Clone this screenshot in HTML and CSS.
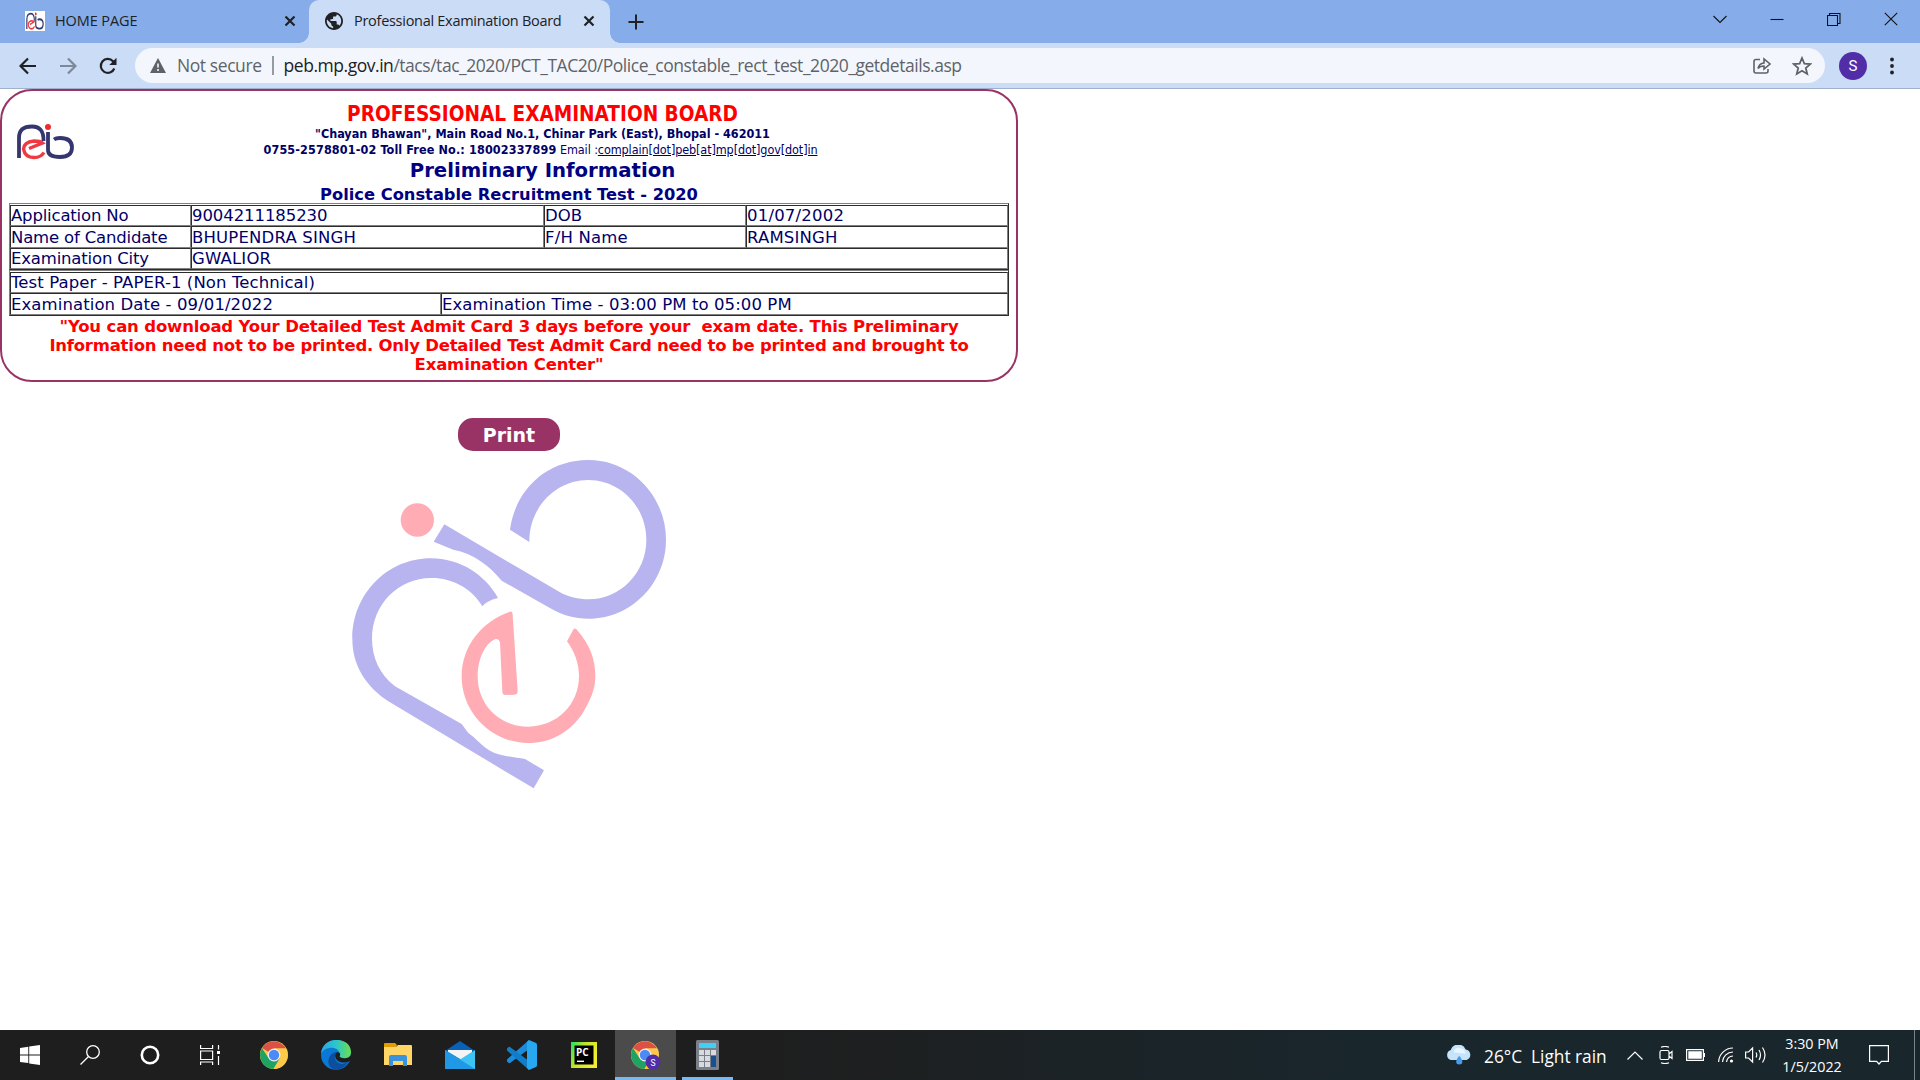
FILE: index.html
```html
<!DOCTYPE html>
<html lang="en">
<head>
<meta charset="utf-8">
<title>Professional Examination Board</title>
<link rel="stylesheet" href="styles.css">
</head>
<body>
<header class="tabstrip">
  <div class="tab">
    <svg class="favicon" viewBox="-4 -3 65 41" preserveAspectRatio="none"><rect x="-5" y="-5" width="70" height="50" fill="#fff"/><use href="#peb"/></svg>
    <span class="tab-title t-home">HOME PAGE</span>
    <svg class="tab-close" viewBox="0 0 12 12"><path d="M1.500 1.500l9 9M10.500 1.500l-9 9"/></svg>
  </div>
  <div class="tab active">
    <svg class="favicon globe" viewBox="2 2 20 20"><path fill="#202124" d="M12 2C6.480 2 2 6.480 2 12s4.480 10 10 10 10-4.480 10-10S17.520 2 12 2zm-1 17.930c-3.950-.49-7-3.850-7-7.930 0-.62.080-1.210.210-1.790L9 15v1c0 1.100.9 2 2 2v1.930zm6.900-2.540c-.26-.81-1-1.390-1.900-1.390h-1v-3c0-.55-.45-1-1-1H8v-2h2c.55 0 1-.45 1-1V7h2c1.100 0 2-.9 2-2v-.41c2.930 1.190 5 4.060 5 7.410 0 2.080-.8 3.970-2.100 5.390z"/></svg>
    <span class="tab-title t-board">Professional Examination Board</span>
    <svg class="tab-close" viewBox="0 0 12 12"><path d="M1.500 1.500l9 9M10.500 1.500l-9 9"/></svg>
  </div>
  <svg class="newtab" viewBox="0 0 16 16"><path d="M8 .5v15M.5 8h15"/></svg>
  <div class="winctl">
    <svg viewBox="0 0 14 14"><path d="M.5 4l6.500 6.500L13.500 4"/></svg>
    <svg viewBox="0 0 14 14"><path d="M.5 7.500h13"/></svg>
    <svg viewBox="0 0 14 14"><path d="M.5 3.500h10v10H.5zM2.500 3V1.500h10.500v10H11"/></svg>
    <svg viewBox="0 0 14 14"><path d="M.8.8l12.400 12.400M13.200.8L.8 13.200"/></svg>
  </div>
</header>
<nav class="toolbar">
  <svg class="nav" viewBox="0 0 18 18"><path d="M17 9H2M9 1.500L1.500 9 9 16.500"/></svg>
  <svg class="nav fwd" viewBox="0 0 18 18"><path d="M1 9h15M9 1.500L16.500 9 9 16.500"/></svg>
  <svg class="nav" viewBox="0 0 18 18"><path d="M15.300 11.500A7 7 0 1 1 14 4.200L16 6.500"/><path d="M17.500.8v7.200h-7.200z" fill="#202124" stroke="none"/></svg>
  <div class="omnibox">
    <svg class="warn" viewBox="0 0 16 15"><path d="M8 0l8 15H0z" fill="#5f6368"/><path d="M8 5.500v4M8 11v2" stroke="#f3f7fd" stroke-width="1.600"/></svg>
    <span class="notsecure">Not secure</span>
    <i class="bar"></i>
    <span class="url"><b>peb.mp.gov.in</b>/tacs/tac_2020/PCT_TAC20/Police_constable_rect_test_2020_getdetails.asp</span>
    <svg class="share" viewBox="0 0 18 17"><path d="M7 2.500H3Q1 2.500 1 4.500V14q0 2 2 2h10q2 0 2-2v-2M5 11.500q1-5 6-5.500V2l6 5-6 5V9q-4 0-6 2.500z"/></svg>
    <svg class="star" viewBox="0 0 18 18"><path d="M9 1.800l2.100 5 5.400.5-4.100 3.500 1.300 5.300L9 13.300l-4.700 2.800 1.300-5.300L1.500 7.300l5.400-.5z"/></svg>
  </div>
  <span class="avatar">S</span>
  <svg class="kebab" viewBox="0 0 4 18"><circle cx="2" cy="2.500" r="1.900"/><circle cx="2" cy="9" r="1.900"/><circle cx="2" cy="15.500" r="1.900"/></svg>
</nav>
<main class="page">
  <section class="card">
    <div class="head">
      <svg class="logo" viewBox="0 0 57 36">
        <g id="peb" fill="none">
          <path d="M2 34V14Q2 2.500 15 2.500 27 2.500 26.500 17" stroke="#35356f" stroke-width="3.800"/>
          <path d="M31 8v18Q31 33 43 33 55 33 55 23.500 55 14 43 14q-4 0-6 1.500" stroke="#35356f" stroke-width="3.800"/>
          <path d="M12 24.500l13.500-5.500Q23 17 17 17 7 18 6.500 25 8 33.500 17 33.500q7 0 10-5" stroke="#ee3a40" stroke-width="3.400"/>
          <circle cx="31" cy="3" r="3" fill="#ee2b30"/>
        </g>
      </svg>
      <div class="titles">
        <div class="org">PROFESSIONAL EXAMINATION BOARD</div>
        <div class="addr a1">"Chayan Bhawan", Main Road No.1, Chinar Park (East), Bhopal - 462011</div>
        <div class="addr contact"><b class="a2">0755-2578801-02 Toll Free No.: 18002337899</b> <span class="mail">Email :<u>complain[dot]peb[at]mp[dot]gov[dot]in</u></span></div>
        <div class="prelim">Preliminary Information</div>
      </div>
    </div>
    <div class="test">Police Constable Recruitment Test - 2020</div>
    <table class="grid info">
      <colgroup><col class="c1"><col class="c2"><col class="c3"><col></colgroup>
      <tr class="low"><td class="label">Application No</td><td class="num">9004211185230</td><td>DOB</td><td class="date">01/07/2002</td></tr>
      <tr class="tall"><td class="label">Name of Candidate</td><td class="caps">BHUPENDRA SINGH</td><td class="caps">F/H Name</td><td class="caps">RAMSINGH</td></tr>
      <tr class="low"><td class="label">Examination City</td><td colspan="3" class="caps">GWALIOR</td></tr>
    </table>
    <table class="grid paper">
      <colgroup><col class="p1"><col></colgroup>
      <tr class="low"><td colspan="2">Test Paper - PAPER-1 (Non Technical)</td></tr>
      <tr class="tall"><td>Examination Date - 09/01/2022</td><td>Examination Time - 03:00 PM to 05:00 PM</td></tr>
    </table>
    <p class="note"><span>"You can download Your Detailed Test Admit Card 3 days before your&nbsp; exam date. This Preliminary</span><br><span class="wide">Information need not to be printed. Only Detailed Test Admit Card need to be printed and brought to</span><br><span>Examination Center"</span></p>
  </section>
  <div class="below">
    <button class="print">Print</button>
    <svg class="mark" viewBox="0 160 1080 1040">
      <g fill="#b8b4ef">
        <path d="M540 390C556 270 650 181 775 181 905 181 1008 290 1008 420 1008 550 905 657 775 657 735 657 700 648 665 628L515 543C480 500 430 460 370 450L311 426 343 374 690 578C715 592 745 599 775 599 870 599 949 520 949 420 949 320 870 241 775 241 680 241 597 320 598 427z"/>
        <path d="M457 620C425 565 365 534 303 535 205 535 126 615 126 717 126 775 150 825 195 860L395 973 415 1000C440 1018 455 1038 480 1053 510 1070 555 1072 585 1078L642 1112 611 1166 180 908C105 860 67 795 67 717 67 585 170 476 303 476 390 476 465 525 504 595 490 598 470 605 457 620z"/>
      </g>
      <g fill="#ffacb4">
        <circle cx="262" cy="361" r="50"/>
        <path d="M540 636Q547 634 548 645L563 875Q563 885 553 885L526 886Q518 886 517 876L510 728Q507 717 496 718C460 735 443 785 443 830 443 915 508 981 595 981 680 981 747 915 747 830 747 790 733 755 711 725L731 688Q736 683 742 692C780 735 796 780 796 830 796 870 780 905 755 945 715 1000 660 1030 595 1030 485 1030 395 940 395 830 395 740 455 665 540 636z"/>
      </g>
    </svg>
  </div>
</main>
<footer class="taskbar">
  <div class="apps">
    <span class="app"><svg width="20" height="20" viewBox="0 0 20 20"><path fill="#fff" d="M0 3l8.300-1.200v7.600H0zM9.200 1.600L20 0v9.400H9.200zM0 10.400h8.300v7.600L0 17zM9.200 10.400H20V20L9.200 18.400z"/></svg></span>
    <span class="app"><svg width="20" height="20" viewBox="0 0 20 20" fill="none" stroke="#fff" stroke-width="1.300"><circle cx="13" cy="7" r="6.300"/><path d="M8.500 11.500L.5 19.500"/></svg></span>
    <span class="app"><svg width="20" height="20" viewBox="0 0 20 20" fill="none" stroke="#fff" stroke-width="2.600"><circle cx="10" cy="10" r="8.200"/></svg></span>
    <span class="app"><svg width="20" height="20" viewBox="0 0 20 20" fill="none" stroke="#fff" stroke-width="1.200"><path d="M.6 0v3.500h12V0M.6 6h12v8.500H.6zM.6 20v-3h12v3M18.500 0v4.500M18.500 11v9"/><path d="M17 6h3v3h-3z" fill="#fff" stroke="none"/></svg></span>
    <span class="app first"><svg width="28" height="28" viewBox="0 0 28 28"><g id="chrome"><circle cx="14" cy="14" r="14" fill="#fcc94b"/><path d="M14 14L1.900 7A14 14 0 0 1 26.100 7.600z" fill="#dd5144"/><path d="M1.900 7A14 14 0 0 0 13.500 28L20 17.500 8.500 17z" fill="#1ea362"/><path d="M14 7.300h12A14 14 0 0 1 13.500 28L20 17z" fill="#fcc94b"/><circle cx="14" cy="14" r="6.400" fill="#f1f1f1"/><circle cx="14" cy="14" r="5.200" fill="#4c8bf5"/></g></svg></span>
    <span class="app"><svg width="30" height="30" viewBox="0 0 30 30"><defs><linearGradient id="eg"><stop offset="0" stop-color="#2aa7e4"/><stop offset=".5" stop-color="#2cc5cf"/><stop offset="1" stop-color="#6be04c"/></linearGradient></defs><circle cx="15" cy="15" r="15" fill="#0a78d4"/><path d="M28 21C24 27 20 29.800 15 30 9 29 6 24 8 18q2-5 7-6-4 10 6 12 4 0 7-3z" fill="#0d4f9f"/><path d="M0 14C1-5 30-4 30 12c0 6-6 8-11 6-1-1-1-1.500 0-3C19 6 4 5 0 14z" fill="url(#eg)"/><path d="M14.500 13.500q2-3 4.500 0 .5 1-.5 3 2 2.500 7 1.500 4.500-1 4.500-4v6l-2 1.500q-6 2-10 0-5-3-3.500-8z" fill="#1e1e1e"/></svg></span>
    <span class="app"><svg width="28" height="24" viewBox="0 0 28 24"><path d="M0 1q0-1 1-1h10l2 2-1 3H0z" fill="#e29b00"/><path d="M0 4h12l2-2h13q1 0 1 1v19H0z" fill="#ffd567"/><path d="M5 23V14q0-2 2-2h14q2 0 2 2v9h-4v-5H9v5z" fill="#3893dc"/></svg></span>
    <span class="app"><svg width="30" height="28" viewBox="0 0 30 28"><path d="M0 10L15 0l15 10z" fill="#0861b5"/><path d="M3 9h24v10H3z" fill="#f4f4f4"/><path d="M0 9l17 10L0 28z" fill="#1c90df"/><path d="M30 9L0 28h30z" fill="#3cc3f3"/><path d="M0 9l30 19H0z" fill="#2098e3"/></svg></span>
    <span class="app"><svg width="30" height="30" viewBox="0 0 30 30"><path d="M22 0v9L3 23q-1 .5-2-.5l-1-1q-1-1.200 0-2z" fill="#1b8dd8"/><path d="M22 30v-9L3 7Q2 6.500 1 7.500l-1 1q-1 1.200 0 2z" fill="#0f7dca"/><path d="M22 0l7 3q1 .5 1 2v20q0 1.500-1 2l-7 3-2-2V2z" fill="#29a8f2"/></svg></span>
    <span class="app"><svg width="26" height="26" viewBox="0 0 26 26"><defs><linearGradient id="pg" x2="1" y2=".5"><stop offset="0" stop-color="#21e25a"/><stop offset=".5" stop-color="#c9e52c"/><stop offset="1" stop-color="#f2ee2f"/></linearGradient></defs><path fill="url(#pg)" d="M0 0h26v26H0z"/><path d="M3.500 3.500h19v19h-19z"/><path d="M6 19.300h7" stroke="#fff" stroke-width="1.400"/><text x="5" y="13.500" class="pc">PC</text></svg></span>
    <span class="app on"><svg width="30" height="28" viewBox="0 0 30 28"><use href="#chrome"/><circle cx="22" cy="21" r="7.500" fill="#512da8"/><text x="19.500" y="24.500" class="s">S</text></svg></span>
    <span class="app run"><svg width="23" height="30" viewBox="0 0 23 30"><rect width="23" height="30" rx="1.500" fill="#7b8088"/><path d="M3 3h17v5H3z" fill="#3fd0f7"/><path d="M3 10h5v5H3zm6 0h5v5H9zm6 0h5v5h-5zM3 16h5v5H3zm6 0h5v5H9zM3 22h5v5H3zm6 0h5v5H9z" fill="#d7dade"/><path d="M15 16h5v11h-5z" fill="#174f90"/></svg></span>
  </div>
  <div class="tray">
    <svg class="cloud" width="26" height="20" viewBox="0.500 1 24.500 18.500"><path d="M5 15a5 5 0 0 1 0-9.500A7.500 7.500 0 0 1 19 5a5.200 5.200 0 0 1 1 10z" fill="#c4e4fb"/><path d="M8 8a4 4 0 0 1 6-4 5 5 0 0 1 5 5" fill="#e9f6ff"/><path d="M13 11q4 5 2.500 7-2.500 2.500-5 0Q9 16 13 11z" fill="#4a9bea"/></svg>
    <span class="weather">26°C&nbsp; Light rain</span>
    <svg class="up" width="16" height="9" viewBox="0 0 16 9"><path d="M.5 8.500L8 1l7.500 7.500"/></svg>
    <svg class="meet" width="14" height="18" viewBox="0 0 14 18"><path d="M2 1.200Q6-.2 10 1.200M2 16.800q4 1.400 8 0M2.500 4.500h6q1.500 0 1.500 1.500v6q0 1.500-1.500 1.500h-6Q1 13.500 1 12V6q0-1.500 1.500-1.500zM10 8l3-2.500v7L10 10"/></svg>
    <svg class="batt" width="19" height="12" viewBox="0 0 19 12"><path d="M.6.6h16.800v10.800H.6z"/><path d="M2.300 2.300h13.500v7.400H2.300zM17.500 4H19v4h-1.500z" fill="#fff" stroke="none"/></svg>
    <svg class="wifi" width="16" height="16" viewBox="0 0 16 16"><path d="M.6 15A14.500 14.500 0 0 1 15 1M4.500 15A10.500 10.500 0 0 1 15 5M8.500 15A7 7 0 0 1 15 9"/><circle cx="13.500" cy="14" r="1.600" fill="#fff" stroke="none"/></svg>
    <svg class="vol" width="21" height="18" viewBox="0 0 21 18"><path d="M.6 6v6h3l4 4V2l-4 4zM11 6.500q1.500 2.500 0 5M14 4q3 5 0 10M17.500 1.500q5 7.500 0 15"/></svg>
    <div class="clock"><span>3:30 PM</span><span>1/5/2022</span></div>
    <svg class="notif" width="20" height="20" viewBox="0 0 20 20"><path d="M.6.600h18.800v15.800h-7L10 19l-2.400-2.600h-7z"/></svg>
    <i class="peek"></i>
  </div>
</footer>
</body>
</html>
```
FILE: styles.css
```css
* { box-sizing: border-box; }
body { margin: 0; width: 1920px; height: 1080px; overflow: hidden; display: flex; flex-direction: column; background: #fff; font-family: "DejaVu Sans", sans-serif; color: navy; }
svg { display: block; flex: none; }
span, b { white-space: nowrap; }

/* Tab strip */
.tabstrip { height: 43px; flex: none; display: flex; align-items: center; background: #86ade9; font-family: "Open Sans", sans-serif; color: #202124; }
.tab { height: 43px; width: 309px; display: flex; align-items: center; padding: 0 13px 2px 25px; }
.tab.active { position: relative; width: 301px; padding: 0 15px 2px 16px; background: #cbdcf6; border-radius: 10px 10px 0 0; }
.tab.active::before, .tab.active::after { content: ""; position: absolute; bottom: 0; width: 10px; height: 10px; }
.tab.active::before { left: -10px; background: radial-gradient(circle at 0 0, #86ade9 9.500px, #cbdcf6 10px); }
.tab.active::after { right: -10px; background: radial-gradient(circle at 100% 0, #86ade9 9.500px, #cbdcf6 10px); }
.favicon { width: 20px; height: 20px; margin-right: 10px; }
.globe { width: 18px; height: 18px; margin-right: 11px; }
.tab-title { font-size: 14.500px; flex: 1; }
.t-home { letter-spacing: -.1px; }
.t-board { letter-spacing: -.28px; }
.tab-close { width: 12px; height: 12px; fill: none; stroke: #202124; stroke-width: 2.200; }
.newtab { width: 16px; height: 16px; margin-left: 18px; fill: none; stroke: #202124; stroke-width: 2; }
.winctl { margin-left: auto; padding: 0 22px 6px 0; display: flex; gap: 43px; }
.winctl svg { width: 14px; height: 14px; fill: none; stroke: #111; stroke-width: 1.100; }

/* Toolbar */
.toolbar { height: 46px; flex: none; display: flex; align-items: center; background: #cbdcf6; border-bottom: 1px solid #9fb1cd; padding: 0 26px 0 19px; font-family: "Open Sans", sans-serif; }
.nav { width: 18px; height: 18px; margin-right: 22px; fill: none; stroke: #202124; stroke-width: 2.200; }
.nav.fwd { stroke: #7d8898; }
.omnibox { width: 1690px; height: 35px; margin-left: -4px; border-radius: 18px; background: #f3f7fd; display: flex; align-items: center; padding: 0 14px 0 15px; color: #5f6368; font-size: 17.500px; }
.warn { width: 16px; height: 15px; margin-right: 11px; }
.notsecure { letter-spacing: -.42px; padding-bottom: 1px; }
.bar { width: 2px; height: 19px; background: #9699a0; margin: 0 10px 0 10px; }
.url { flex: 1; letter-spacing: -.465px; padding-bottom: 1px; }
.url b { font-weight: 400; color: #202124; }
.share { width: 18px; height: 17px; margin-right: 21px; }
.star { width: 20px; height: 20px; margin-right: -1px; }
.share, .star { fill: none; stroke: #5f6368; stroke-width: 1.600; }
.avatar { width: 28px; height: 28px; margin-left: 14px; border-radius: 50%; background: #512da8; color: #fff; font: 15px/28px Roboto, sans-serif; text-align: center; }
.kebab { width: 4px; height: 18px; margin-left: auto; fill: #202124; }

/* Admit card */
.page { flex: 1; }
.card { width: 1018px; height: 293px; border: 2px solid #993366; border-radius: 32px; padding: 8px 7px 0; }
.head { display: flex; height: 83px; }
.logo { width: 57px; height: 36px; margin: 25px 0 0 8px; overflow: visible; }
.titles { flex: 1; margin-left: 2px; text-align: center; white-space: nowrap; }
.org { color: red; font: bold 20.600px/25px "DejaVu Sans Condensed", "DejaVu Sans", sans-serif; height: 24px; margin-top: 3px; }
.addr { font: 12.500px/16px "DejaVu Sans Condensed", "DejaVu Sans", sans-serif; color: #000066; }
.a1, .a2 { font-weight: bold; }
.contact { padding-right: 4px; }
.a2 { letter-spacing: .12px; }
.mail { letter-spacing: -.1px; }
.prelim { font-weight: bold; font-size: 19.700px; line-height: 26px; }
.test { height: 21px; font-weight: bold; font-size: 16.300px; line-height: 25px; text-align: center; }
.grid { width: 1000px; table-layout: fixed; border: 1px outset gray; padding-top: 1px; border-spacing: 0; font-size: 16.500px; line-height: 19px; color: #000066; }
.grid td { border: 1px inset gray; padding: 0; height: 21px; white-space: nowrap; }
.grid .low td { padding-top: 1px; line-height: 18px; vertical-align: bottom; }
.grid .tall td { height: 22px; }
.grid .label { letter-spacing: -.18px; }
.grid .caps { letter-spacing: .17px; }
.grid .num { letter-spacing: -.08px; }
.grid .date { letter-spacing: .2px; }
.info { height: 67px; }
.paper { height: 46px; letter-spacing: .09px; }
.c1 { width: 181px; } .c2 { width: 353px; } .c3 { width: 202px; } .p1 { width: 431px; }
.note { margin: 1px 0 0; color: red; font-weight: bold; font-size: 16.500px; line-height: 19px; letter-spacing: -.165px; text-align: center; white-space: nowrap; }
.note .wide { letter-spacing: -.235px; }
.below { width: 1018px; padding-top: 36px; }
.print { display: block; margin: 0 auto; width: 102px; height: 33px; border: 0; border-radius: 15px; background: #993366; color: #fff; font: bold 19px/33px "DejaVu Sans", sans-serif; padding: 1px 0 0; }
.mark { width: 360px; height: 346.700px; margin: 2.300px 0 0 330px; }

/* Taskbar */
.taskbar { height: 50px; flex: none; display: flex; justify-content: space-between; background: linear-gradient(90deg, #1e1e1e 40%, #19262c 70%); font-family: "Open Sans", sans-serif; color: #fff; }
.apps { display: flex; }
.app { width: 60px; height: 50px; display: flex; align-items: center; justify-content: center; }
.app:nth-child(n+5) { width: 62px; }
.app.first { margin-left: 3px; }
.app.on { width: 61px; background: #4b4b4b; border-bottom: 3px solid #76b9f5; padding-top: 3px; }
.app.app.run { width: 51px; margin-left: 6px; border-bottom: 3px solid #76b9f5; padding-top: 3px; }
.pc { font: bold 10px "Open Sans", sans-serif; fill: #fff; }
.s { font: 8.500px Roboto, sans-serif; fill: #fff; }
.tray { display: flex; align-items: center; }
.tray svg { fill: none; stroke: #fff; stroke-width: 1.200; }
.tray .cloud { stroke: none; margin-right: 12px; }
.weather { font-size: 17.300px; width: 124px; margin: 2px 19px 0 0; }
.up { margin-right: 16px; }
.meet { margin-right: 13px; }
.batt { margin-right: 13px; }
.wifi { margin-right: 11px; }
.vol { margin-right: 15px; }
.clock { width: 62px; display: flex; flex-direction: column; align-items: center; font-size: 14.300px; line-height: 23px; }
.notif { margin: 0 25px 0 26px; }
.peek { width: 1px; height: 50px; background: #7c8386; margin-right: 5px; }
```
